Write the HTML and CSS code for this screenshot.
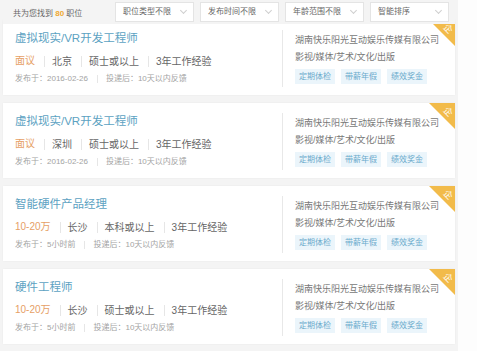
FILE: index.html
```html
<!DOCTYPE html>
<html lang="zh-CN">
<head>
    <meta charset="UTF-8">
    <meta name="viewport" content="width=device-width, initial-scale=1.0">
    <title>职位列表</title>
    <link rel="stylesheet" href="styles.css">
</head>
<body>
    <div class="page">
        <div class="filters">
            <span class="count">共为您找到 <b>80</b> 职位</span>
            <div class="select">职位类型不限<i class="arrow"></i></div>
            <div class="select">发布时间不限<i class="arrow"></i></div>
            <div class="select">年龄范围不限<i class="arrow"></i></div>
            <div class="select">智能排序<i class="arrow"></i></div>
        </div>

        <div class="card first">
            <div class="job">
                <div class="title">虚拟现实/VR开发工程师</div>
                <div class="info"><span class="salary">面议</span><span>北京</span><span>硕士或以上</span><span>3年工作经验</span></div>
                <div class="meta"><span>发布于：2016-02-26</span><span>投递后：10天以内反馈</span></div>
            </div>
            <div class="company">
                <div class="name">湖南快乐阳光互动娱乐传媒有限公司</div>
                <div class="industry">影视/媒体/艺术/文化/出版</div>
                <div class="tags"><span>定期体检</span><span>带薪年假</span><span>绩效奖金</span></div>
            </div>
            <div class="corner"><span>企</span></div>
        </div>

        <div class="card">
            <div class="job">
                <div class="title">虚拟现实/VR开发工程师</div>
                <div class="info"><span class="salary">面议</span><span>深圳</span><span>硕士或以上</span><span>3年工作经验</span></div>
                <div class="meta"><span>发布于：2016-02-26</span><span>投递后：10天以内反馈</span></div>
            </div>
            <div class="company">
                <div class="name">湖南快乐阳光互动娱乐传媒有限公司</div>
                <div class="industry">影视/媒体/艺术/文化/出版</div>
                <div class="tags"><span>定期体检</span><span>带薪年假</span><span>绩效奖金</span></div>
            </div>
            <div class="corner"><span>企</span></div>
        </div>

        <div class="card">
            <div class="job">
                <div class="title">智能硬件产品经理</div>
                <div class="info"><span class="salary">10-20万</span><span>长沙</span><span>本科或以上</span><span>3年工作经验</span></div>
                <div class="meta"><span>发布于：5小时前</span><span>投递后：10天以内反馈</span></div>
            </div>
            <div class="company">
                <div class="name">湖南快乐阳光互动娱乐传媒有限公司</div>
                <div class="industry">影视/媒体/艺术/文化/出版</div>
                <div class="tags"><span>定期体检</span><span>带薪年假</span><span>绩效奖金</span></div>
            </div>
            <div class="corner"><span>企</span></div>
        </div>

        <div class="card">
            <div class="job">
                <div class="title">硬件工程师</div>
                <div class="info"><span class="salary">10-20万</span><span>长沙</span><span>硕士或以上</span><span>3年工作经验</span></div>
                <div class="meta"><span>发布于：5小时前</span><span>投递后：10天以内反馈</span></div>
            </div>
            <div class="company">
                <div class="name">湖南快乐阳光互动娱乐传媒有限公司</div>
                <div class="industry">影视/媒体/艺术/文化/出版</div>
                <div class="tags"><span>定期体检</span><span>带薪年假</span><span>绩效奖金</span></div>
            </div>
            <div class="corner"><span>企</span></div>
        </div>
    </div>
</body>
</html>
```

FILE: styles.css
```css
body {
    margin: 0;
    padding: 0;
    background-color: #fdfdfd;
    font-family: "Liberation Sans", "Noto Sans CJK SC", sans-serif;
    color: #666;
}
.page {
    width: 452px;
    padding: 0 3px;
    background-color: #f4f4f4;
    overflow: hidden;
}
.filters {
    position: relative;
    z-index: 1;
    display: flex;
    align-items: center;
    height: 24px;
    background-color: #f4f4f4;
}
.count {
    font-size: 8px;
    color: #666;
    margin-left: 10px;
    width: 102px;
}
.count b {
    color: #f0a830;
    font-weight: bold;
}
.select {
    position: relative;
    width: 70px;
    height: 18px;
    line-height: 18px;
    padding-left: 7px;
    margin-right: 6px;
    background-color: #fff;
    border: 1px solid #e4e4e4;
    font-size: 8px;
    color: #666;
}
.arrow {
    position: absolute;
    right: 7px;
    top: 5px;
    width: 4px;
    height: 4px;
    border-right: 1px solid #cfcfcf;
    border-bottom: 1px solid #cfcfcf;
    transform: rotate(45deg);
}
.card {
    position: relative;
    display: flex;
    height: 75px;
    margin-bottom: 8px;
    background-color: #fff;
    box-shadow: 0 0 2px rgba(0, 0, 0, 0.05);
    overflow: hidden;
}
.card.first {
    margin-top: -4px;
}
.job {
    width: 267px;
    padding: 10px 0 0 12px;
}
.title {
    font-size: 11.5px;
    line-height: 16px;
    color: #5ca2c2;
}
.info {
    display: flex;
    align-items: center;
    margin-top: 7px;
    font-size: 10px;
    line-height: 16px;
    color: #666;
}
.info span + span {
    border-left: 1px solid #e6e6e6;
    line-height: 11px;
    padding-left: 7px;
    margin-left: 9px;
}
.info .salary {
    color: #e6a066;
}
.meta {
    display: flex;
    align-items: center;
    margin-top: 4px;
    font-size: 8px;
    line-height: 12px;
    color: #a3a3a3;
}
.meta span + span {
    border-left: 1px solid #e6e6e6;
    line-height: 8px;
    padding-left: 8px;
    margin-left: 9px;
}
.company {
    margin: 10px 0 8px 0;
    padding: 3px 0 0 12px;
    border-left: 1px solid #e8e8e8;
}
.name,
.industry {
    font-size: 9px;
    line-height: 14px;
    color: #777;
}
.industry {
    margin-top: 3px;
}
.tags {
    display: flex;
    margin-top: 5px;
}
.tags span {
    height: 15px;
    line-height: 15px;
    padding: 0 4px;
    margin-right: 6px;
    background-color: #ebf5fb;
    color: #6aaacb;
    font-size: 8px;
}
.corner {
    position: absolute;
    top: 0;
    right: 0;
    width: 0;
    height: 0;
    border-top: 26px solid #f2bb4a;
    border-left: 26px solid transparent;
}
.corner span {
    position: absolute;
    top: -24px;
    right: 2px;
    font-size: 9px;
    color: #fff;
    transform: rotate(45deg);
}
```
